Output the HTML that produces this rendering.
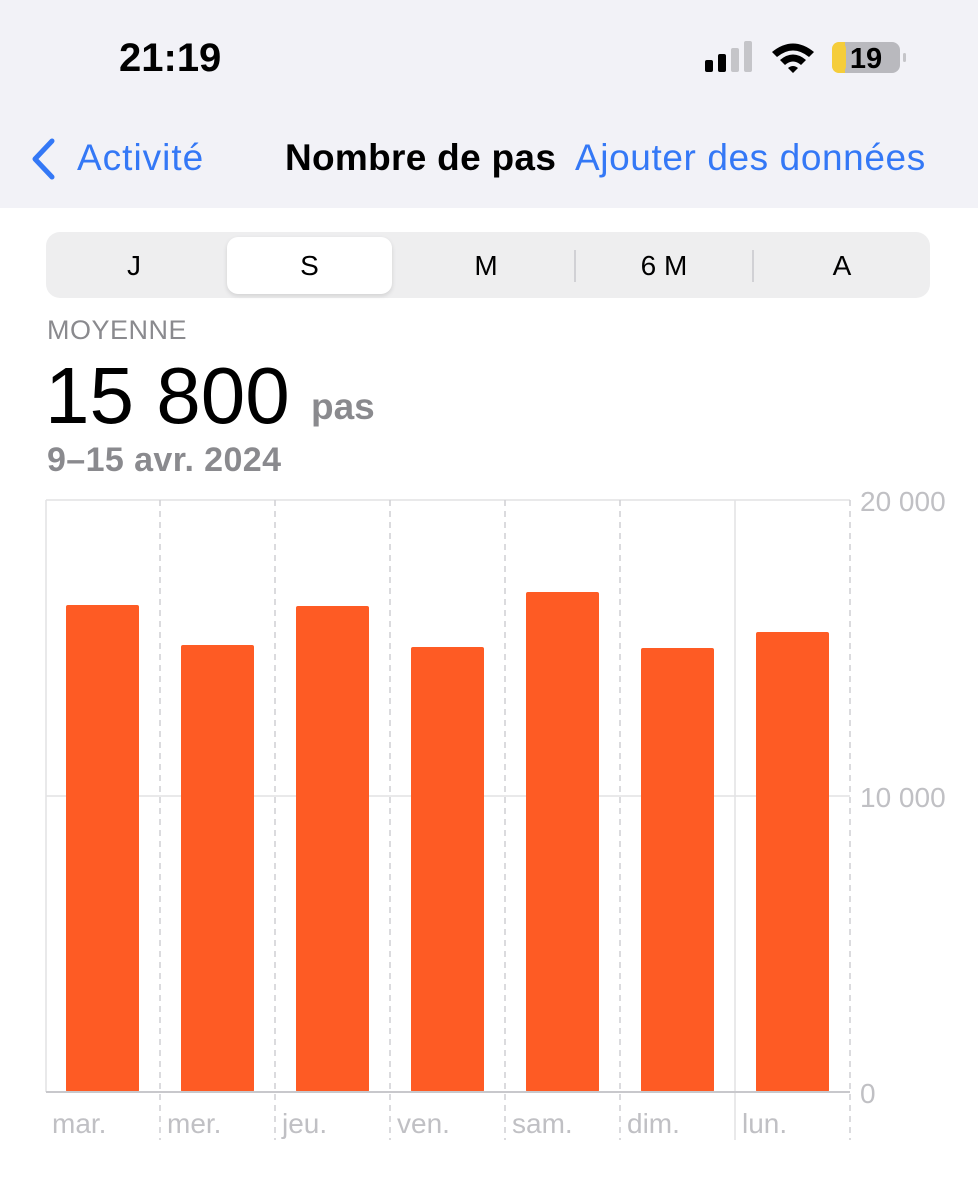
<!DOCTYPE html><html><head><meta charset="utf-8"><style>
body{margin:0;width:978px;height:1200px;background:#fff;font-family:"Liberation Sans",sans-serif;position:relative;overflow:hidden}
.a{position:absolute}
</style></head><body>
<div class="a" style="left:0;top:0;width:978px;height:208px;background:#f2f2f7"></div>
<div class="a" style="left:119px;top:36px;font-size:40px;font-weight:bold;color:#000">21:19</div>
<svg class="a" style="left:700px;top:38px" width="220" height="40">
<rect x="5" y="22" width="8" height="12" rx="2"/><rect x="18" y="16" width="8" height="18" rx="2"/>
<rect x="31" y="10" width="8" height="24" rx="2" fill="#c5c5c9"/><rect x="44" y="3" width="8" height="31" rx="2" fill="#c5c5c9"/>
<path d="M72 14 Q93 -3 114 14 L109 19 Q93 6 77 19Z M80 22 Q93 11 106 22 L101 27 Q93 20 85 27Z M88 30 L93 35 L98 30 Q93 26 88 30Z"/>
<rect x="132" y="4" width="68" height="31" rx="8" fill="#b9b9be"/>
<rect x="132" y="4" width="14" height="31" rx="7" fill="#f5cd3a"/><rect x="139" y="4" width="6" height="31" fill="#f5cd3a"/>
<rect x="203" y="15" width="3" height="9" rx="1.5" fill="#c5c5c9"/>
<text x="166" y="30" font-size="29" font-weight="bold" text-anchor="middle" font-family="Liberation Sans">19</text>
</svg>
<svg class="a" style="left:28px;top:138px" width="30" height="42"><path d="M24 3 L7 21 L24 39" stroke="#3478f6" stroke-width="5" fill="none" stroke-linecap="round" stroke-linejoin="round"/></svg>
<div class="a" style="left:77px;top:137px;font-size:37px;letter-spacing:1px;color:#3478f6">Activité</div>
<div class="a" style="left:285px;top:137px;font-size:37px;letter-spacing:0.3px;font-weight:bold;color:#000">Nombre de pas</div>
<div class="a" style="left:575px;top:137px;font-size:37px;letter-spacing:0.6px;color:#3478f6;white-space:nowrap">Ajouter des données</div>
<div class="a" style="left:46px;top:232px;width:884px;height:66px;background:#eeeeef;border-radius:14px"></div>
<div class="a" style="left:227px;top:237px;width:165px;height:57px;background:#fff;border-radius:11px;box-shadow:0 2px 5px rgba(0,0,0,.12)"></div>
<div class="a" style="left:574px;top:250px;width:2px;height:32px;background:#d1d1d5"></div>
<div class="a" style="left:752px;top:250px;width:2px;height:32px;background:#d1d1d5"></div>
<div class="a" style="left:46px;top:250px;width:176px;text-align:center;font-size:28px">J</div>
<div class="a" style="left:227px;top:250px;width:165px;text-align:center;font-size:28px">S</div>
<div class="a" style="left:398px;top:250px;width:176px;text-align:center;font-size:28px">M</div>
<div class="a" style="left:576px;top:250px;width:176px;text-align:center;font-size:28px">6 M</div>
<div class="a" style="left:754px;top:250px;width:176px;text-align:center;font-size:28px">A</div>
<div class="a" style="left:47px;top:315px;font-size:27px;color:#8a8a8e;letter-spacing:0.5px">MOYENNE</div>
<div class="a" style="left:45px;top:350px;font-size:80px;color:#000">15 800</div>
<div class="a" style="left:311px;top:386px;font-size:37px;font-weight:bold;color:#8a8a8e">pas</div>
<div class="a" style="left:47px;top:441px;font-size:34px;letter-spacing:0.4px;font-weight:bold;color:#8a8a8e">9–15 avr. 2024</div>
<svg class="a" style="left:0;top:0" width="978" height="1200">
<g stroke="#e2e2e4" stroke-width="1.5">
<line x1="46" y1="500" x2="850" y2="500"/><line x1="46" y1="796" x2="850" y2="796"/>
<line x1="46" y1="500" x2="46" y2="1092"/><line x1="735" y1="500" x2="735" y2="1140"/>
</g>
<g stroke="#cfcfd3" stroke-width="1.5" stroke-dasharray="6,5">
<line x1="160" y1="500" x2="160" y2="1140"/><line x1="275" y1="500" x2="275" y2="1140"/><line x1="390" y1="500" x2="390" y2="1140"/><line x1="505" y1="500" x2="505" y2="1140"/><line x1="620" y1="500" x2="620" y2="1140"/><line x1="850" y1="500" x2="850" y2="1140"/>
</g>
<g fill="#fe5b24">
<rect x="66" y="605" width="73" height="487" rx="2"/><rect x="181" y="645" width="73" height="447" rx="2"/>
<rect x="296" y="606" width="73" height="486" rx="2"/><rect x="411" y="647" width="73" height="445" rx="2"/>
<rect x="526" y="592" width="73" height="500" rx="2"/><rect x="641" y="648" width="73" height="444" rx="2"/>
<rect x="756" y="632" width="73" height="460" rx="2"/>
</g>
<line x1="46" y1="1092" x2="850" y2="1092" stroke="#c8c8cc" stroke-width="2"/>
<g fill="#c0c0c4" font-size="28" font-family="Liberation Sans">
<text x="860" y="511">20 000</text><text x="860" y="807">10 000</text><text x="860" y="1103">0</text>
<text x="52" y="1133">mar.</text><text x="167" y="1133">mer.</text><text x="282" y="1133">jeu.</text><text x="397" y="1133">ven.</text><text x="512" y="1133">sam.</text><text x="627" y="1133">dim.</text><text x="742" y="1133">lun.</text>
</g>
</svg>
</body></html>
